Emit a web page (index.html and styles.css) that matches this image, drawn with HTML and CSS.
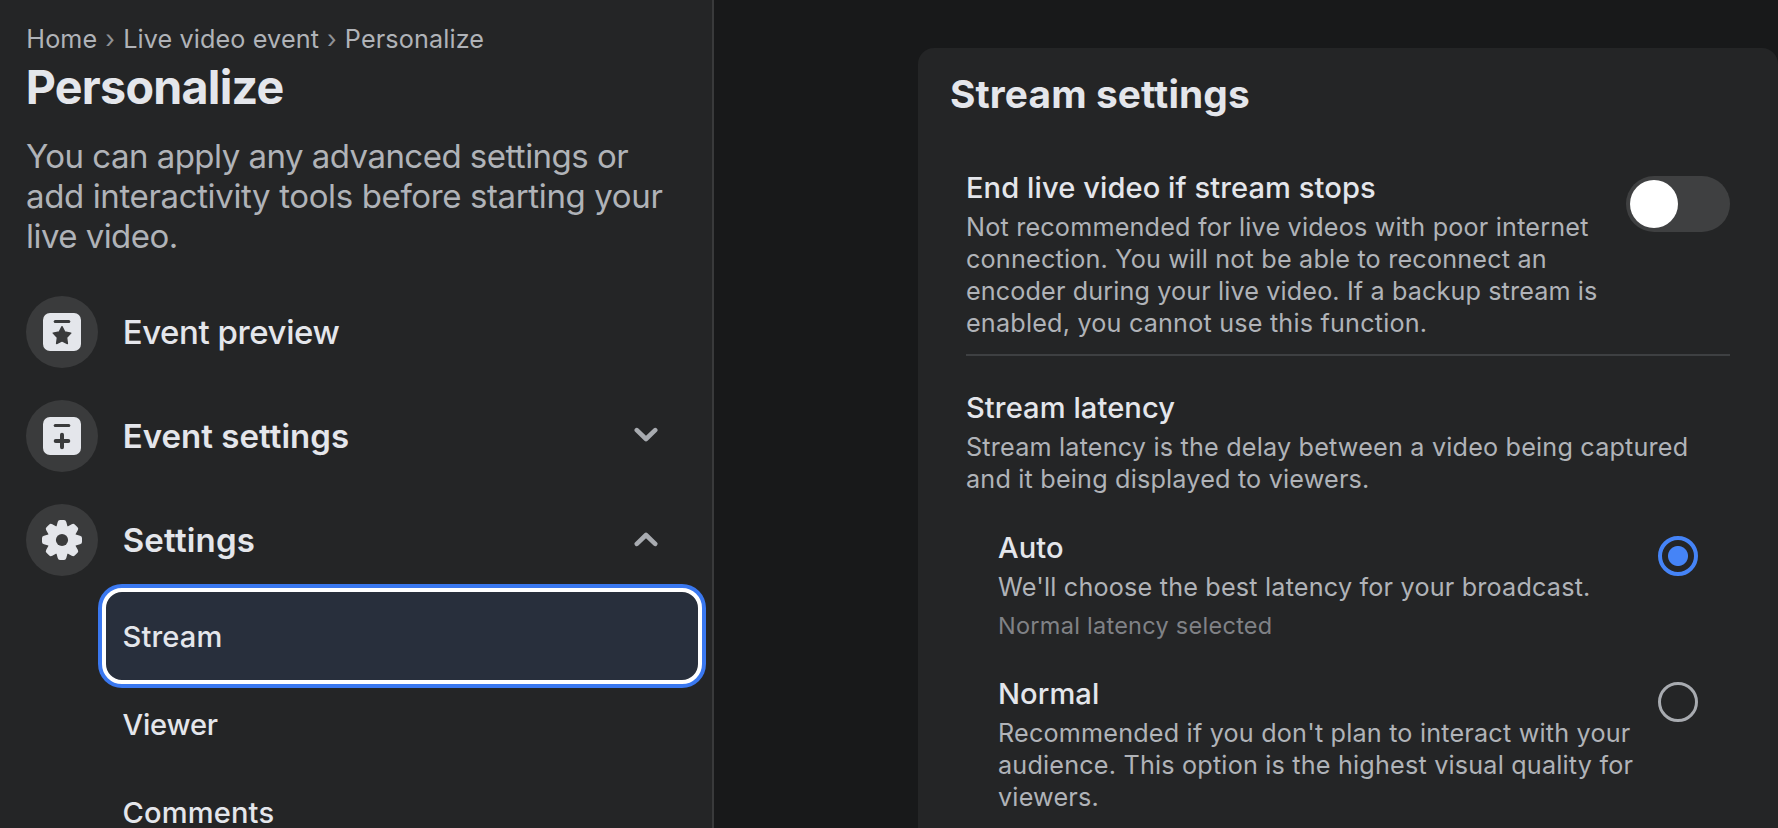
FILE: index.html
```html
<!DOCTYPE html>
<html lang="en">
<head>
<meta charset="utf-8">
<title>Personalize</title>
<link rel="stylesheet" href="styles.css">
</head>
<body>
<div class="app">
  <aside class="sidebar">
    <nav class="crumbs"><span>Home</span><span class="sep">›</span><span>Live video event</span><span class="sep">›</span><span>Personalize</span></nav>
    <h1 class="title">Personalize</h1>
    <p class="intro"><span class="intro-first">You can apply any advanced settings or</span><br>add interactivity tools before starting your<br><span class="intro-last">live video.</span></p>
    <ul class="nav">
      <li class="nav-row">
        <span class="badge"><svg width="40" height="40" viewBox="0 0 40 40"><rect class="fg" x="1" y="1" width="38" height="38" rx="7"/><rect class="cut" x="11.7" y="8" width="16.6" height="3" rx="1.5"/><path class="cut star" d="M20 14.7L22.8 20L28.8 21.1L24.6 25.5L25.4 31.5L20 28.9L14.6 31.5L15.4 25.5L11.2 21.1L17.2 20Z"/></svg></span>
        <span class="label medium">Event preview</span>
      </li>
      <li class="nav-row">
        <span class="badge"><svg width="40" height="40" viewBox="0 0 40 40"><rect class="fg" x="1" y="1" width="38" height="38" rx="7"/><rect class="cut" x="11.7" y="8" width="16.6" height="3" rx="1.5"/><path class="plus" d="M20 18.7V31.3M13.7 25H26.3"/></svg></span>
        <span class="label">Event settings</span>
        <svg class="chevron" width="24" height="16" viewBox="0 0 24 16"><path d="M2.8 3.2L12 12L21.2 3.2"/></svg>
      </li>
      <li class="nav-row">
        <span class="badge"><svg width="40" height="40" viewBox="-20 -20 40 40"><defs><path id="tooth" d="M-5.9 -12L-4.3 -18Q-3.8 -20 -2 -20H2Q3.8 -20 4.3 -18L5.9 -12Z"/></defs><g class="fg"><circle r="14.4"/><use href="#tooth"/><use href="#tooth" transform="rotate(45)"/><use href="#tooth" transform="rotate(90)"/><use href="#tooth" transform="rotate(135)"/><use href="#tooth" transform="rotate(180)"/><use href="#tooth" transform="rotate(225)"/><use href="#tooth" transform="rotate(270)"/><use href="#tooth" transform="rotate(315)"/></g><circle class="cut" r="6.1"/></svg></span>
        <span class="label spaced">Settings</span>
        <svg class="chevron" width="24" height="16" viewBox="0 0 24 16"><path d="M2.8 12.8L12 4L21.2 12.8"/></svg>
      </li>
    </ul>
    <ul class="subnav">
      <li class="sub selected">Stream</li>
      <li class="sub narrow">Viewer</li>
      <li class="sub">Comments</li>
    </ul>
  </aside>
  <main class="main">
    <section class="card">
      <h2 class="card-title">Stream settings</h2>
      <div class="card-body">
        <div class="row">
          <div>
            <h3 class="name">End live video if stream stops</h3>
            <p class="text">Not recommended for live videos with poor internet<br>connection. You will not be able to reconnect an<br><span class="tight">encoder during your live video. If a backup stream is</span><br>enabled, you cannot use this function.</p>
          </div>
          <span class="toggle"><span class="knob"></span></span>
        </div>
        <hr class="divider">
        <h3 class="name">Stream latency</h3>
        <p class="text">Stream latency is the delay between a video being captured<br>and it being displayed to viewers.</p>
        <div class="options">
          <div class="row">
            <div>
              <h3 class="name">Auto</h3>
              <p class="text">We'll choose the best latency for your broadcast.</p>
              <p class="note">Normal latency selected</p>
            </div>
            <span class="radio checked"></span>
          </div>
          <div class="row">
            <div>
              <h3 class="name">Normal</h3>
              <p class="text">Recommended if you don't plan to interact with your<br>audience. This option is the highest visual quality for<br>viewers.</p>
            </div>
            <span class="radio"></span>
          </div>
        </div>
      </div>
    </section>
  </main>
</div>
</body>
</html>
```
FILE: styles.css
```css
* { box-sizing: border-box; margin: 0; padding: 0; }
html, body { height: 100%; overflow: hidden; }
body { background: #18191a; color: #e4e6eb; font-family: Inter, "Liberation Sans", sans-serif; }
ul { list-style: none; }
.app { display: flex; height: 828px; overflow: hidden; }

.sidebar { width: 714px; flex: none; height: 828px; overflow: hidden; padding-top: 23px; background: #242526; border-right: 2px solid #393a3b; }
.crumbs { display: flex; padding-left: 26.3px; font-size: 25.2px; line-height: 32px; letter-spacing: .12px; color: #b0b3b8; white-space: nowrap; }
.sep { width: 25.8px; text-align: center; color: #8f9195; }
.title { margin: 4px 0 0 25.8px; font-size: 46.6px; line-height: 56px; font-weight: 700; letter-spacing: -.75px; }
.intro { margin: 21px 0 24px 26px; font-size: 33px; line-height: 40px; letter-spacing: -.37px; color: #b0b3b8; white-space: nowrap; }
.intro-first { letter-spacing: -.53px; }
.intro-last { letter-spacing: -.55px; }

.nav-row { display: flex; align-items: center; height: 104px; padding: 0 54px 0 26px; }
.badge { width: 72px; height: 72px; flex: none; display: flex; align-items: center; justify-content: center; border-radius: 50%; background: #3a3b3c; }
.badge svg { display: block; }
.fg { fill: #e4e6eb; }
.cut { fill: #3a3b3c; }
.star { stroke: #3a3b3c; stroke-width: 1.4; stroke-linejoin: round; }
.plus { fill: none; stroke: #3a3b3c; stroke-width: 4; stroke-linecap: round; }
.label { flex: 1; margin-left: 24.7px; font-size: 33px; line-height: 40px; font-weight: 600; letter-spacing: .04px; }
.medium { font-weight: 500; letter-spacing: -.43px; }
.spaced { letter-spacing: .2px; }
.chevron { margin-bottom: 2px; fill: none; stroke: #a8abb0; stroke-width: 4.6; stroke-linecap: round; stroke-linejoin: round; }

.subnav { padding: 0 14px 0 106px; }
.sub { height: 88px; padding: 1px 0 0 16.5px; font-size: 29.1px; line-height: 88px; font-weight: 500; letter-spacing: .15px; }
.narrow { letter-spacing: -.2px; }
.selected { border-radius: 16px; background: #282f3c; box-shadow: 0 0 0 4px #3a78f0; }
.selected { margin: 0 -4px; padding-left: 16.5px; height: 96px; margin-top: -4px; margin-bottom: -4px; border: 4px solid #fff; border-radius: 20px; }

.main { flex: 1; padding: 48px 0 0 204px; }
.card { height: 900px; padding: 22px 48px 0 32px; border-radius: 16px; background: #242526; }
.card-title { font-size: 38.8px; line-height: 48px; font-weight: 700; letter-spacing: .13px; }
.card-body { padding: 52px 0 0 16px; }
.row { display: flex; justify-content: space-between; }
.name { font-size: 29.1px; line-height: 36px; font-weight: 500; letter-spacing: .08px; }
.text { margin-top: 5px; font-size: 25.2px; line-height: 32px; letter-spacing: .19px; color: #b0b3b8; white-space: nowrap; }
.tight { letter-spacing: .12px; }
.note { margin: 9px 0 -1px; font-size: 23.5px; line-height: 28px; letter-spacing: .27px; color: #808286; }
.divider { height: 2px; margin: 15px 0 34px; border: 0; background: #3e4042; }
.toggle { width: 104px; height: 56px; flex: none; margin-top: 6px; padding: 4px; border-radius: 28px; background: #3f4041; }
.knob { display: block; width: 48px; height: 48px; border-radius: 50%; background: #fff; }
.options { display: flex; flex-direction: column; gap: 37px; padding: 35px 32px 0; }
.radio { width: 40px; height: 40px; flex: none; margin-top: 6px; border: 3px solid #a8abb0; border-radius: 50%; }
.checked { border: 4px solid #4584f7; background: radial-gradient(circle, #4584f7 9.5px, transparent 10.5px); }
```
